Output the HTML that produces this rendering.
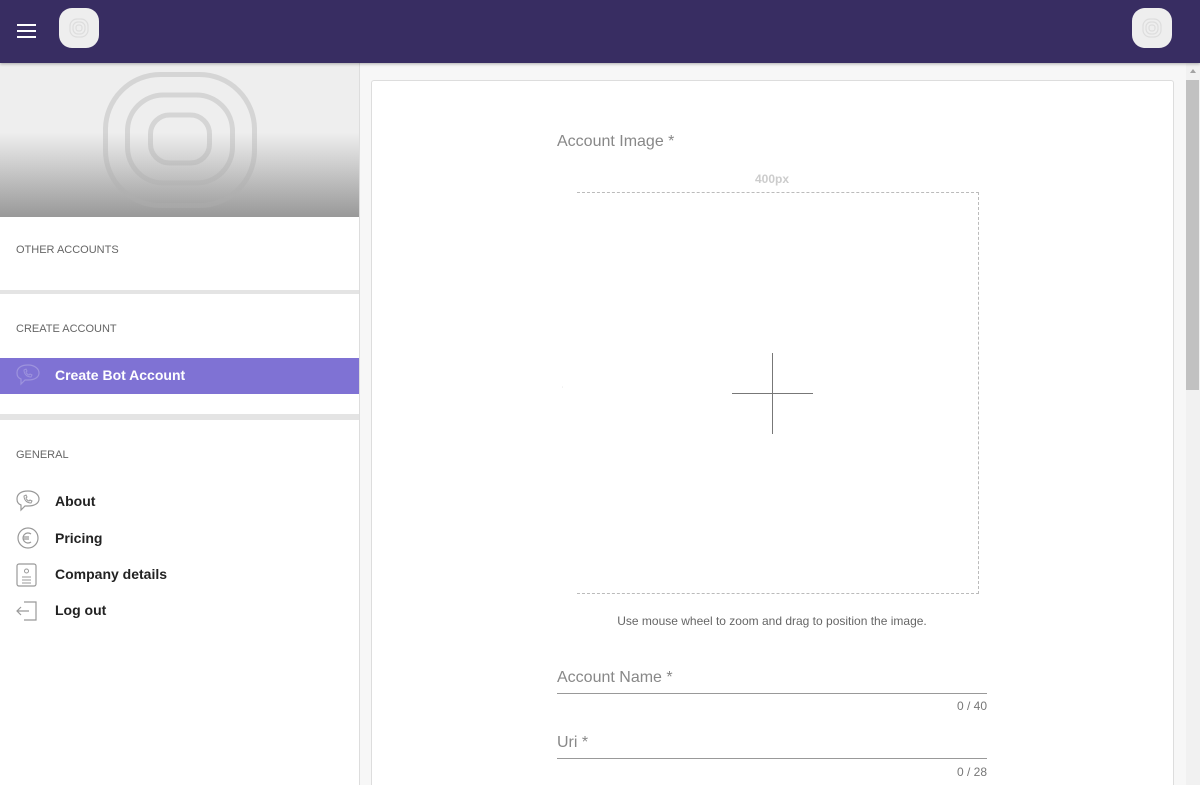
<!DOCTYPE html>
<html><head><meta charset="utf-8"><style>
*{margin:0;padding:0;box-sizing:border-box}
html,body{width:1200px;height:785px;overflow:hidden}
body{font-family:"Liberation Sans",Arial,sans-serif;background:#f7f7f7;position:relative}
.hdr{position:absolute;left:0;top:0;width:1200px;height:63px;background:#382d62;box-shadow:0 1px 3px rgba(0,0,0,.3);z-index:2}
.logo{position:absolute;top:8px;width:40px;height:40px;background:#eee;border-radius:13px}
.side{position:absolute;left:0;top:63px;width:360px;height:722px;background:#fff;border-right:1px solid #ddd}
.banner{height:154px;background:linear-gradient(#eee 0,#eee 45%,#999 100%);position:relative;overflow:hidden}
.sec{font-size:11px;color:#666;position:absolute;left:16px}
.div{position:absolute;left:0;width:359px;background:#e4e4e4}
.item{position:absolute;left:55px;font-size:14px;font-weight:bold;color:#222}
.ic{position:absolute;left:16px}
.card{position:absolute;left:371px;top:80px;width:803px;height:705px;background:#fff;border:1px solid #ddd;border-bottom:none;border-radius:3px 3px 0 0}
.sb{position:absolute;left:1186px;top:63px;width:14px;height:722px;background:#f1f1f1}
.lab{position:absolute;color:#888;font-size:16px}
</style></head><body>
<div class="hdr">
 <div style="position:absolute;left:17px;top:24px;width:19px;height:2px;background:#fff;box-shadow:0 6px 0 #fff,0 12px 0 #fff"></div>
 <div class="logo" style="left:59px"><svg width="40" height="40"><g fill="none" stroke="#ddd" stroke-width="1.2"><rect x="11" y="11" width="18" height="18" rx="7"/><rect x="14" y="14" width="12" height="12" rx="5"/><rect x="17" y="17" width="6" height="6" rx="2.5"/></g></svg></div>
 <div class="logo" style="left:1132px"><svg width="40" height="40"><g fill="none" stroke="#ddd" stroke-width="1.2"><rect x="11" y="11" width="18" height="18" rx="7"/><rect x="14" y="14" width="12" height="12" rx="5"/><rect x="17" y="17" width="6" height="6" rx="2.5"/></g></svg></div>
</div>
<div class="side">
 <div class="banner"><svg width="360" height="154" style="position:absolute;left:0;top:0"><g fill="none" stroke="rgba(175,175,175,.4)" stroke-width="5"><rect x="105.5" y="11.5" width="149" height="131" rx="55"/><rect x="127.5" y="32" width="105" height="88" rx="36"/><rect x="150.5" y="52" width="59" height="48" rx="19"/></g></svg></div>
 <div class="sec" style="top:181px">OTHER ACCOUNTS</div>
 <div class="div" style="top:227px;height:4px"></div>
 <div class="sec" style="top:260px">CREATE ACCOUNT</div>
 <div style="position:absolute;left:0;top:295px;width:359px;height:36px;background:#7f72d4"></div>
 <svg class="ic" style="top:300px" width="24" height="26"><path d="M12 2C5 2 1 5 1 10c0 3 1 5 4 6v5l4-4c1 0 2 0 3 0 7 0 11-3 11-7S19 2 12 2z" fill="none" stroke="#9d93dd" stroke-width="1.2"/><path d="M8 7c0 4 3 7 7 7l1-2-2-1-1 1c-1 0-3-2-3-3l1-1-1-2z" fill="none" stroke="#9d93dd"/></svg>
 <div class="item" style="top:304px;color:#fff">Create Bot Account</div>
 <div class="div" style="top:351px;height:6px"></div>
 <div class="sec" style="top:386px">GENERAL</div>
 <svg class="ic" style="top:426px" width="24" height="26"><path d="M12 2C5 2 1 5 1 10c0 3 1 5 4 6v5l4-4c1 0 2 0 3 0 7 0 11-3 11-7S19 2 12 2z" fill="none" stroke="#999" stroke-width="1.2"/><path d="M8 7c0 4 3 7 7 7l1-2-2-1-1 1c-1 0-3-2-3-3l1-1-1-2z" fill="none" stroke="#999"/></svg>
 <div class="item" style="top:430px">About</div>
 <svg class="ic" style="top:464px" width="24" height="24"><circle cx="12" cy="11" r="10" fill="none" stroke="#999" stroke-width="1.2"/><path d="M15 7a5 5 0 1 0 0 8M7 10h6M7 12h6" fill="none" stroke="#999" stroke-width="1.2"/></svg>
 <div class="item" style="top:467px">Pricing</div>
 <svg class="ic" style="top:500px" width="24" height="26"><rect x="1" y="1" width="19" height="22" rx="2" fill="none" stroke="#999" stroke-width="1.2"/><circle cx="10.5" cy="8" r="2" fill="none" stroke="#999"/><path d="M6 14h9M6 17h9M6 20h9" stroke="#999"/></svg>
 <div class="item" style="top:503px">Company details</div>
 <svg class="ic" style="top:536px" width="24" height="24"><path d="M8 3h12v18H8M13 12H1M5 8l-4 4 4 4" fill="none" stroke="#999" stroke-width="1.2"/></svg>
 <div class="item" style="top:539px">Log out</div>
</div>
<div class="card"></div>
<div class="lab" style="left:557px;top:133px">Account Image *</div>
<div style="position:absolute;left:755px;top:172px;font-size:12px;color:#ccc;font-weight:bold">400px</div>
<div style="position:absolute;left:577px;top:192px;width:402px;height:402px;border-top:1px dashed #bbb;border-right:1px dashed #bbb;border-bottom:1px dashed #bbb"></div>
<div style="position:absolute;left:557px;top:360px;width:6px;height:45px;overflow:hidden"><div style="position:absolute;left:-1px;top:20px;font-size:10px;color:#ccc;transform:rotate(90deg);white-space:nowrap">&lt;&gt;px</div></div>
<div style="position:absolute;left:772px;top:353px;width:1px;height:81px;background:#777"></div>
<div style="position:absolute;left:732px;top:393px;width:81px;height:1px;background:#777"></div>
<div style="position:absolute;left:557px;top:614px;width:430px;text-align:center;font-size:12px;color:#666">Use mouse wheel to zoom and drag to position the image.</div>
<div class="lab" style="left:557px;top:669px">Account Name *</div>
<div style="position:absolute;left:557px;top:693px;width:430px;height:1px;background:#999"></div>
<div style="position:absolute;left:557px;top:699px;width:430px;text-align:right;font-size:12px;color:#777">0 / 40</div>
<div class="lab" style="left:557px;top:734px">Uri *</div>
<div style="position:absolute;left:557px;top:758px;width:430px;height:1px;background:#999"></div>
<div style="position:absolute;left:557px;top:765px;width:430px;text-align:right;font-size:12px;color:#777">0 / 28</div>
<div class="sb"><div style="position:absolute;left:4px;top:6px;border-left:3px solid transparent;border-right:3px solid transparent;border-bottom:4px solid #a3a3a3"></div><div style="position:absolute;left:0;top:17px;width:13px;height:310px;background:#c1c1c1"></div></div>
</body></html>
